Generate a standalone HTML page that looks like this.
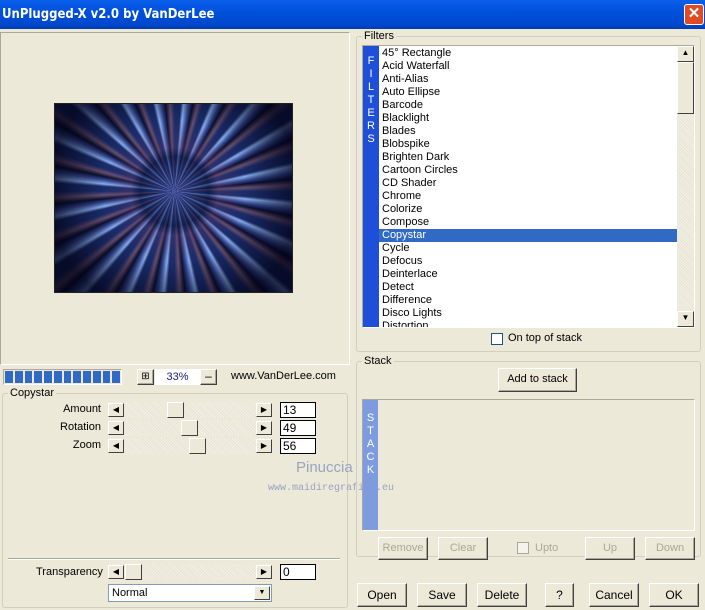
<!DOCTYPE html>
<html><head><style>
*{box-sizing:border-box;margin:0;padding:0}
body{width:705px;height:610px;background:#ECE9D8;font-family:"Liberation Sans",sans-serif;font-size:11px;color:#000;position:relative;overflow:hidden}
.a{position:absolute}
.title{left:0;top:0;width:705px;height:29px;background:linear-gradient(#0A5FE8,#0050DE 40%,#0048CC 85%,#003CB0);color:#fff;font-weight:bold;font-size:13px;padding:7px 0 0 2px;font-family:"DejaVu Sans Condensed","Liberation Sans",sans-serif}
.close{left:684px;top:4px;width:20px;height:21px;background:#E04A25;border:1px solid #fff;border-radius:3px;color:#fff;font-size:15px;text-align:center;line-height:18px;font-weight:bold}
.sunk{border:1px solid;border-color:#ACA899 #fff #fff #ACA899}
.grp{border:1px solid #D0D0BF;border-radius:3px}
.lbl{background:#ECE9D8;padding:0 2px}
.btn{border:1px solid #000;border-color:#fff #404040 #404040 #fff;box-shadow:inset -1px -1px #ACA899;background:#ECE9D8;text-align:center;font-size:12px}
.dis{color:#ACA899}
.row{height:13px;line-height:13px;padding-left:3px;font-size:11px;white-space:nowrap}
.sel{background:#316AC5;color:#fff}
.track{background:repeating-linear-gradient(45deg,#F4F2E8 0 1px,#E6E3D3 1px 2px)}
.sb{width:16px;height:14px;background:#ECE9D8;border:1px solid;border-color:#fff #404040 #404040 #fff;font-size:8px;text-align:center;line-height:12px}
.edit{background:#fff;border:1px solid #000;height:16px;padding-left:2px;font-size:12px;line-height:14px}
</style></head><body>
<div class="a title">UnPlugged-X v2.0 by VanDerLee</div>
<div class="a close">✕</div>

<div class="a sunk" style="left:0;top:32px;width:350px;height:333px"></div>
<div class="a" style="left:54px;top:103px;width:239px;height:190px;background:#000;border:1px solid #222;overflow:hidden">
 <div class="a" style="left:0;top:0;width:239px;height:190px;background:repeating-conic-gradient(from 0deg at 50% 46%,#1a2c6a 0 4deg,#8ab0ee 6deg,#3a4e9a 9deg,#0a1030 12deg,#6a5070 15deg,#1a2c6a 18deg)"></div>
 <div class="a" style="left:0;top:0;width:239px;height:190px;background:radial-gradient(circle at 50% 46%,rgba(80,100,200,.4) 0,rgba(10,20,60,.6) 22%,rgba(90,60,110,.35) 28%,rgba(0,0,0,0) 45%,rgba(0,0,20,.75) 80%)"></div>
</div>

<div class="a sunk" style="left:3px;top:369px;width:119px;height:16px;padding:1px;display:flex;gap:2px">
 <div style="width:8px;background:#3169C6"></div><div style="width:8px;background:#3169C6"></div><div style="width:8px;background:#3169C6"></div><div style="width:8px;background:#3169C6"></div><div style="width:8px;background:#3169C6"></div><div style="width:8px;background:#3169C6"></div><div style="width:8px;background:#3169C6"></div><div style="width:8px;background:#3169C6"></div><div style="width:8px;background:#3169C6"></div><div style="width:8px;background:#3169C6"></div><div style="width:8px;background:#3169C6"></div><div style="width:8px;background:#3169C6"></div>
</div>
<div class="a btn" style="left:137px;top:369px;width:17px;height:16px;font-size:10px;line-height:13px">⊞</div>
<div class="a" style="left:155px;top:369px;width:45px;height:16px;background:#fff;color:#1a1a7a;text-align:center;line-height:16px">33%</div>
<div class="a btn" style="left:200px;top:369px;width:17px;height:16px;line-height:13px">–</div>
<div class="a" style="left:231px;top:370px;font-size:11px">www.VanDerLee.com</div>

<div class="a grp" style="left:2px;top:393px;width:346px;height:215px"></div>
<div class="a lbl" style="left:8px;top:387px">Copystar</div>
<div class="a" style="left:0;top:403px;width:101px;text-align:right;font-size:11px">Amount</div>
<div class="a" style="left:0;top:421px;width:101px;text-align:right;font-size:11px">Rotation</div>
<div class="a" style="left:0;top:439px;width:101px;text-align:right;font-size:11px">Zoom</div>

<div class="a track" style="left:108px;top:402px;width:164px;height:16px"></div>
<div class="a sb" style="left:108px;top:403px">◀</div><div class="a sb" style="left:256px;top:403px">▶</div>
<div class="a sb" style="left:167px;top:402px;width:17px;height:16px"></div>
<div class="a track" style="left:108px;top:420px;width:164px;height:16px"></div>
<div class="a sb" style="left:108px;top:421px">◀</div><div class="a sb" style="left:256px;top:421px">▶</div>
<div class="a sb" style="left:181px;top:420px;width:17px;height:16px"></div>
<div class="a track" style="left:108px;top:438px;width:164px;height:16px"></div>
<div class="a sb" style="left:108px;top:439px">◀</div><div class="a sb" style="left:256px;top:439px">▶</div>
<div class="a sb" style="left:189px;top:438px;width:17px;height:16px"></div>
<div class="a edit" style="left:280px;top:402px;width:36px">13</div>
<div class="a edit" style="left:280px;top:420px;width:36px">49</div>
<div class="a edit" style="left:280px;top:438px;width:36px">56</div>

<div class="a" style="left:296px;top:459px;font-size:15px;color:#9aa3c4">Pinuccia</div>
<div class="a" style="left:268px;top:483px;font-size:10px;color:#9aa3c4;font-family:'Liberation Mono',monospace">www.maidiregrafica.eu</div>

<div class="a" style="left:8px;top:558px;width:332px;height:2px;border-top:1px solid #ACA899;border-bottom:1px solid #fff"></div>
<div class="a" style="left:36px;top:566px;font-size:11px">Transparency</div>
<div class="a track" style="left:108px;top:564px;width:164px;height:16px"></div>
<div class="a sb" style="left:108px;top:565px">◀</div><div class="a sb" style="left:256px;top:565px">▶</div>
<div class="a sb" style="left:125px;top:564px;width:17px;height:16px"></div>
<div class="a edit" style="left:280px;top:564px;width:36px">0</div>
<div class="a" style="left:108px;top:584px;width:164px;height:18px;background:#fff;border:1px solid #7F9DB9;padding:2px 3px;font-size:11px">Normal</div>
<div class="a sb" style="left:254px;top:586px;height:14px;width:16px;font-size:7px">▼</div>

<div class="a grp" style="left:356px;top:36px;width:345px;height:316px"></div>
<div class="a lbl" style="left:362px;top:30px">Filters</div>
<div class="a" style="left:362px;top:45px;width:333px;height:283px;border:1px solid;border-color:#ACA899 #fff #fff #ACA899;background:#fff"></div>
<div class="a" style="left:363px;top:46px;width:16px;height:281px;background:#1F4FD8;color:#fff;font-size:11px;text-align:center;line-height:13px;padding-top:9px">F<br>I<br>L<br>T<br>E<br>R<br>S</div>
<div class="a" style="left:379px;top:46px;width:298px;height:281px;overflow:hidden;padding-top:1px">
<div class="row">45° Rectangle</div><div class="row">Acid Waterfall</div><div class="row">Anti-Alias</div><div class="row">Auto Ellipse</div><div class="row">Barcode</div><div class="row">Blacklight</div><div class="row">Blades</div><div class="row">Blobspike</div><div class="row">Brighten Dark</div><div class="row">Cartoon Circles</div><div class="row">CD Shader</div><div class="row">Chrome</div><div class="row">Colorize</div><div class="row">Compose</div><div class="row sel">Copystar</div><div class="row">Cycle</div><div class="row">Defocus</div><div class="row">Deinterlace</div><div class="row">Detect</div><div class="row">Difference</div><div class="row">Disco Lights</div><div class="row">Distortion</div>
</div>
<div class="a" style="left:677px;top:46px;width:17px;height:281px;background:repeating-linear-gradient(45deg,#F4F2E8 0 1px,#E6E3D3 1px 2px)"></div>
<div class="a sb" style="left:677px;top:46px;width:17px;height:16px">▲</div>
<div class="a sb" style="left:677px;top:62px;width:17px;height:52px"></div>
<div class="a sb" style="left:677px;top:311px;width:17px;height:16px">▼</div>
<div class="a" style="left:491px;top:333px;width:12px;height:12px;background:#fff;border:1px solid #1C5180"></div>
<div class="a" style="left:508px;top:332px;font-size:11px">On top of stack</div>

<div class="a grp" style="left:356px;top:361px;width:345px;height:196px"></div>
<div class="a lbl" style="left:362px;top:355px">Stack</div>
<div class="a btn" style="left:498px;top:368px;width:79px;height:24px;font-size:11px;line-height:21px">Add to stack</div>
<div class="a" style="left:362px;top:399px;width:333px;height:132px;border:1px solid;border-color:#ACA899 #fff #fff #ACA899"></div>
<div class="a" style="left:363px;top:400px;width:15px;height:130px;background:#7E9BE0;color:#fff;text-align:center;line-height:13px;padding-top:12px">S<br>T<br>A<br>C<br>K</div>
<div class="a btn dis" style="left:378px;top:537px;width:50px;height:23px;font-size:11px;line-height:21px">Remove</div>
<div class="a btn dis" style="left:438px;top:537px;width:50px;height:23px;font-size:11px;line-height:21px">Clear</div>
<div class="a" style="left:517px;top:542px;width:12px;height:12px;border:1px solid #ACA899;background:#F4F3EE"></div>
<div class="a dis" style="left:535px;top:542px;font-size:11px">Upto</div>
<div class="a btn dis" style="left:585px;top:537px;width:50px;height:23px;font-size:11px;line-height:21px">Up</div>
<div class="a btn dis" style="left:645px;top:537px;width:50px;height:23px;font-size:11px;line-height:21px">Down</div>

<div class="a btn" style="left:357px;top:583px;width:50px;height:24px;line-height:22px">Open</div>
<div class="a btn" style="left:417px;top:583px;width:50px;height:24px;line-height:22px">Save</div>
<div class="a btn" style="left:477px;top:583px;width:50px;height:24px;line-height:22px">Delete</div>
<div class="a btn" style="left:545px;top:583px;width:29px;height:24px;line-height:22px">?</div>
<div class="a btn" style="left:589px;top:583px;width:50px;height:24px;line-height:22px">Cancel</div>
<div class="a btn" style="left:649px;top:583px;width:50px;height:24px;line-height:22px">OK</div>
</body></html>
